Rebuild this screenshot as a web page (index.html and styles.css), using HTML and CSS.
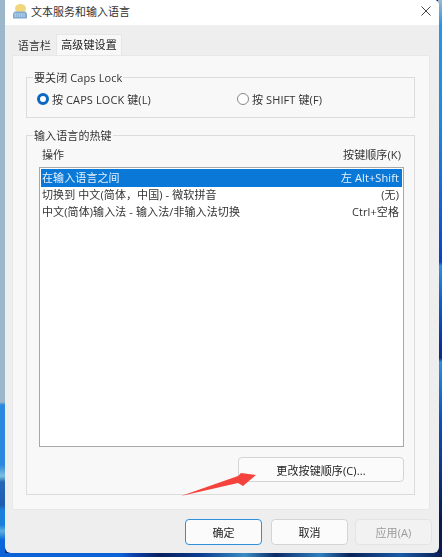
FILE: index.html
```html
<!DOCTYPE html>
<html lang="zh-CN">
<head>
<meta charset="utf-8">
<title>文本服务和输入语言</title>
<link rel="stylesheet" href="styles.css">
</head>
<body>
<div class="desktop">
  <div class="window">
    <header class="titlebar">
      <svg class="app-icon" viewBox="0 0 16 16" width="16" height="16">
        <ellipse cx="8.500" cy="5.500" rx="5.500" ry="4.500" fill="#f0d67c"/>
        <path d="M1 10.500 2.500 8.500h11l1.500 2V15.500H1z" fill="#7fa9d3"/>
        <path d="M2.500 11h11M2.500 13h11" stroke="#dfeaf5" stroke-width="1" stroke-dasharray="1.500 .7"/>
      </svg>
      <span class="title">文本服务和输入语言</span>
      <svg class="close" viewBox="0 0 10 10" width="10" height="10">
        <path d="M.5.5l9 9M9.500.5l-9 9" stroke="#444" stroke-width="1" fill="none"/>
      </svg>
    </header>
    <div class="body">
      <nav class="tabs">
        <span class="tab">语言栏</span>
        <span class="tab active">高级键设置</span>
      </nav>
      <section class="panel">
        <fieldset class="group group-caps">
          <legend>要关闭 Caps Lock</legend>
          <div class="radios">
            <label class="radio"><span class="dot on"></span>按 CAPS LOCK 键(L)</label>
            <label class="radio"><span class="dot"></span>按 SHIFT 键(F)</label>
          </div>
        </fieldset>
        <fieldset class="group group-keys">
          <legend>输入语言的热键</legend>
          <div class="cols"><span>操作</span><span>按键顺序(K)</span></div>
          <div class="list">
            <div class="row selected"><span>在输入语言之间</span><span>左 Alt+Shift</span></div>
            <div class="row"><span>切换到 中文(简体，中国) - 微软拼音</span><span>(无)</span></div>
            <div class="row"><span>中文(简体)输入法 - 输入法/非输入法切换</span><span>Ctrl+空格</span></div>
          </div>
          <div class="change-row"><button class="btn change">更改按键顺序(C)...</button></div>
        </fieldset>
      </section>
      <footer class="actions">
        <button class="btn default">确定</button>
        <button class="btn">取消</button>
        <button class="btn disabled">应用(A)</button>
      </footer>
    </div>
    <svg class="arrow" viewBox="0 0 85 35" width="85" height="35">
      <path d="M6 31 63 11 66 8 81 10 68 21 63 18z" fill="#f4433c"/>
    </svg>
  </div>
</div>
</body>
</html>
```
FILE: styles.css
```css
* { box-sizing: border-box; }
html, body { margin: 0; padding: 0; width: 442px; height: 557px; overflow: hidden; }
body { font-family: "Open Sans", "Noto Sans CJK SC", sans-serif; font-size: 11px; letter-spacing: .1px; color: #222; }
.desktop {
  width: 442px; height: 557px; padding: 0 3px 4px 5px;
  background-color: #0a2a70;
  background-repeat: no-repeat;
  background-image:
    linear-gradient(90deg, #0a62d6 0, #0a62d6 120px, #0b3fa6 135px, #08205e 160px, #0a3c90 200px, #3a8cc4 245px, #0c2a66 275px, #2f7fc0 320px, #0a2258 350px, #1a5aa8 400px, #0a1e50 442px),
    linear-gradient(180deg, #9cb7ca 0, #9cb7ca 402px, #2a88de 405px, #2a88de 465px, #7cc0e0 476px, #2468b8 482px, #1f5cb0 505px, #1a80dc 510px, #1a80dc 525px, #5cb0dc 531px, #0a68dc 540px, #0a62d6 557px),
    linear-gradient(180deg, #9fb8cc 0, #2a94e8 25px, #1e88e4 120px, #1460d8 210px, #0a3fc8 262px, #2f8fe0 266px, #1060d0 300px, #0a30a0 345px, #0a2a80 358px, #2a90e0 362px, #0a50c0 420px, #103a90 462px, #0a1a50 520px, #0a1a50 557px);
  background-size: 442px 4px, 5px 553px, 4px 553px;
  background-position: 0 553px, 0 0, 438px 0;
}
.window {
  position: relative; height: 553px; background: #eeeeee;
  border-radius: 0 5px 6px 6px; overflow: hidden;
  display: flex; flex-direction: column;
  filter: blur(.3px);
}
.titlebar { height: 25px; background: #fff; display: flex; align-items: center; padding: 0 0 3px 7px; }
.app-icon { margin-right: 3px; }
.title { flex: 1; color: #333; letter-spacing: 0; }
.close { margin-right: 8px; }
.body { flex: 1; padding: 9px 9px 8px 7px; display: flex; flex-direction: column; }
.tabs { height: 21px; display: flex; align-items: flex-end; padding-left: 1px; }
.tab { height: 19px; width: 43px; text-align: center; line-height: 19px; color: #333; }
.tab.active { height: 21px; width: 66px; background: #f8f8f8; border: 1px solid #e6e6e6; border-bottom: 0; line-height: 19px; color: #222; }
.panel { height: 455px; background: #f8f8f8; border: 1px solid #e8e8e8; padding: 14px 14px 0 13px; }
.group { margin: 0; padding: 0; border: 1px solid #dcdcdc; min-width: 0; }
.group legend { margin-left: 6px; padding: 1px 1px 0; line-height: 14px; color: #333; }
.group-caps { height: 48px; }
.radios { display: flex; padding: 6px 0 0 10px; }
.radio { display: flex; align-items: center; height: 16px; color: #333; }
.radio:first-child { width: 200px; }
.dot { width: 12px; height: 12px; border-radius: 50%; border: 1px solid #888; margin-right: 3px; background: #fff; }
.dot.on { border: 3px solid #0a67c2; }
.group-keys { height: 367px; margin-top: 10px; padding: 0 10px 0 12px; }
.group-keys legend { margin-left: -6px; }
.cols { display: flex; justify-content: space-between; padding: 3px 3px 0 3px; height: 24px; color: #333; }
.list { height: 280px; background: #fff; border: 1px solid #a8a8a8; padding: 1px; }
.row { height: 17px; line-height: 16px; display: flex; justify-content: space-between; padding: 0 3px 0 1px; color: #333; }
.row.selected { background: #0a78d7; color: #e8f2fb; height: 18px; line-height: 18px; }
.change-row { display: flex; justify-content: flex-end; margin-top: 10px; }
.btn {
  font: inherit; letter-spacing: inherit; color: #222; height: 26px; width: 77px; padding: 0;
  background: #fbfbfb; border: 1px solid #d4d4d4; border-radius: 4px;
}
.change { width: 166px; height: 25px; }
.actions { display: flex; justify-content: flex-end; gap: 9px; padding: 9px 0 0 0; margin-right: -2px; }
.actions .disabled { color: #9a9a9a; background: #f2f2f2; border-color: #e4e4e4; margin-left: -2px; }
.actions .default { border: 1.5px solid #2f8fd8; }
.arrow { position: absolute; left: 170px; top: 465px; }
```
